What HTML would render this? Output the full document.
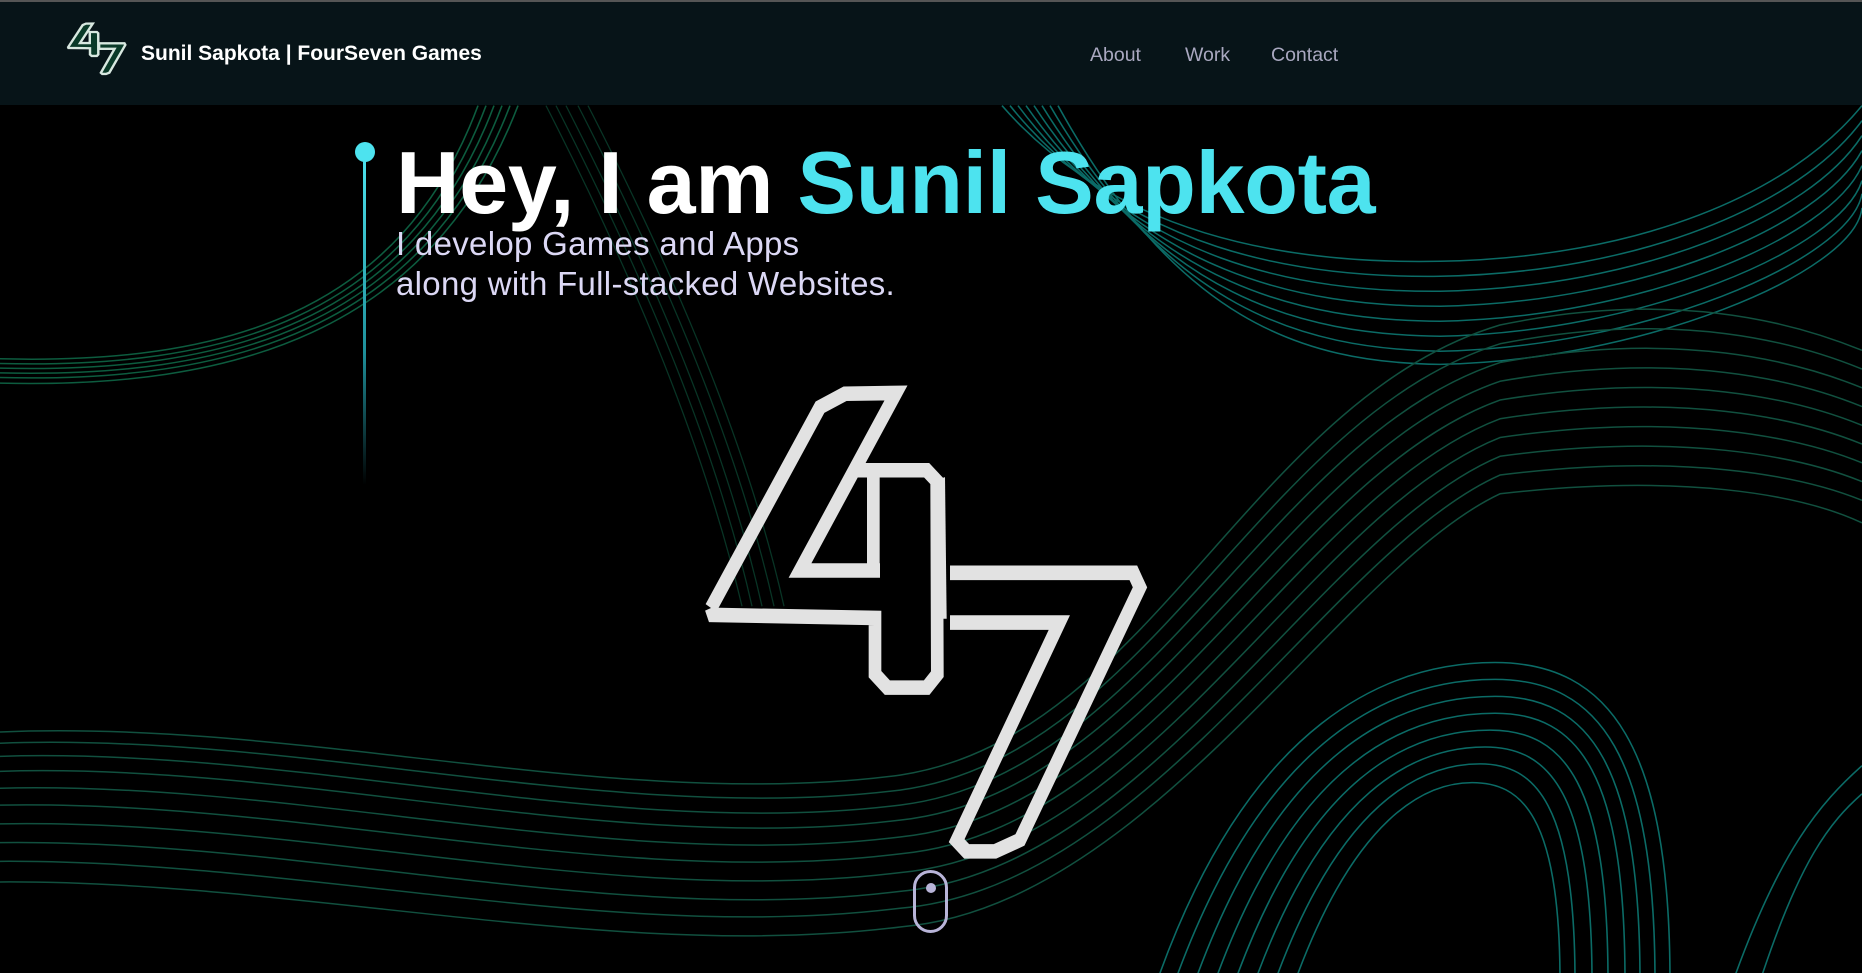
<!DOCTYPE html>
<html><head><meta charset="utf-8"><style>
*{margin:0;padding:0;box-sizing:border-box}
html,body{width:1862px;height:973px;overflow:hidden;background:#000;font-family:"Liberation Sans",sans-serif}
.nav{position:absolute;left:0;top:0;width:1862px;height:105px;background:#071418;border-top:2px solid #555}
.brand{position:absolute;left:141px;top:40px;color:#fff;font-weight:bold;font-size:21px}
.link{position:absolute;top:42px;color:#a9a8c0;font-size:19.5px}
.h1{position:absolute;left:396px;top:139px;font-size:88px;line-height:88px;font-weight:bold;color:#fff;white-space:nowrap;letter-spacing:-0.3px}
.h1 span{color:#4de3ef}
.sub{position:absolute;left:396px;top:224px;font-size:33px;line-height:40px;color:#dcd8f5;letter-spacing:0.3px}
.vline{position:absolute;left:363px;top:155px;width:3px;height:330px;background:linear-gradient(#4de3ef,#1e8f9a 60%,rgba(0,0,0,0))}
.dot{position:absolute;left:355px;top:142px;width:20px;height:20px;border-radius:50%;background:#4de3ef}
</style></head><body>
<svg width="1862" height="973" style="position:absolute;left:0;top:0" fill="none">
<g transform="matrix(1 0 0 0.9376 0 6.24)">
<g stroke="#0d5c3f" stroke-width="1.6">
<path d="M0 376 C220 382 400 330 478 106"/>
<path d="M0 381 C222 387 406 334 486 106"/>
<path d="M0 386 C224 392 412 338 494 106"/>
<path d="M0 391 C226 397 418 342 502 106"/>
<path d="M0 396 C228 402 424 346 510 106"/>
<path d="M0 402 C230 408 430 350 518 106"/>
</g>
<g stroke="#0c4a35" stroke-width="1.3" opacity="0.7">
<path d="M546 106 C620 260 700 450 742 640"/>
<path d="M556 106 C630 260 712 450 752 640"/>
<path d="M566 106 C640 260 722 450 762 640"/>
<path d="M578 106 C652 260 734 450 774 640"/>
<path d="M588 106 C662 260 744 450 784 640"/>
</g>
<g stroke="#0b6b66" stroke-width="1.6">
<path d="M1002 106 C1120 250 1300 275 1440 272 C1640 268 1790 200 1862 106"/>
<path d="M1010 106 C1128 262 1300 290 1440 288 C1640 284 1800 212 1862 122"/>
<path d="M1018 106 C1136 274 1300 305 1440 304 C1640 300 1810 224 1862 138"/>
<path d="M1026 106 C1144 286 1300 320 1440 320 C1640 316 1820 236 1862 154"/>
<path d="M1034 106 C1152 298 1300 335 1440 336 C1640 332 1830 248 1862 170"/>
<path d="M1042 106 C1160 310 1300 350 1440 352 C1640 348 1840 260 1862 186"/>
<path d="M1050 106 C1168 322 1300 365 1440 368 C1640 364 1850 272 1862 200"/>
<path d="M1058 106 C1176 334 1300 380 1440 382 C1640 378 1855 285 1862 215"/>
</g>
<g stroke="#11503f" stroke-width="1.6">
<path d="M0 774 C300 760 620 860 900 820 C1150 780 1250 420 1500 340 C1680 300 1800 340 1862 367"/>
<path d="M0 786 C300 774 620 874 900 836 C1150 800 1260 440 1500 360 C1680 322 1800 360 1862 387"/>
<path d="M0 800 C300 790 620 890 900 852 C1150 820 1270 460 1500 380 C1680 344 1800 380 1862 407"/>
<path d="M0 816 C300 806 620 906 900 868 C1150 840 1280 480 1500 400 C1680 366 1800 400 1862 427"/>
<path d="M0 834 C300 826 620 924 900 886 C1150 860 1290 500 1500 420 C1680 388 1800 420 1862 447"/>
<path d="M0 852 C300 846 620 942 900 904 C1150 880 1300 520 1500 440 C1680 410 1800 440 1862 467"/>
<path d="M0 872 C300 866 620 962 900 924 C1150 900 1310 540 1500 460 C1680 432 1800 460 1862 487"/>
<path d="M0 892 C300 888 620 982 900 944 C1150 920 1320 560 1500 480 C1680 454 1800 480 1862 507"/>
<path d="M0 912 C300 910 620 1000 900 962 C1150 940 1330 580 1500 500 C1680 476 1800 500 1862 527"/>
<path d="M0 934 C300 932 620 1020 900 982 C1150 960 1340 600 1500 520 C1680 498 1800 520 1862 551"/>
</g>
<g stroke="#0b6b66" stroke-width="1.6">
<path d="M1157 1040 C1250 760 1390 700 1495 700 C1610 700 1670 790 1670 1040"/>
<path d="M1175 1040 C1265 775 1395 718 1495 718 C1600 718 1655 800 1655 1040"/>
<path d="M1195 1040 C1280 790 1400 736 1495 736 C1590 736 1640 810 1640 1040"/>
<path d="M1215 1040 C1295 805 1405 754 1495 754 C1580 754 1625 820 1625 1040"/>
<path d="M1235 1040 C1310 820 1410 772 1490 772 C1565 772 1608 830 1608 1040"/>
<path d="M1255 1040 C1325 835 1415 790 1485 790 C1550 790 1592 840 1592 1040"/>
<path d="M1275 1040 C1340 850 1420 808 1480 808 C1535 808 1575 850 1575 1040"/>
<path d="M1295 1040 C1355 865 1425 828 1472 828 C1520 828 1560 860 1560 1040"/>
<path d="M1733 1040 C1780 900 1820 850 1862 810"/>
<path d="M1760 1040 C1800 910 1830 870 1862 840"/>
</g>
</g>
</svg>

<div class="nav">
<svg style="position:absolute;left:64px;top:19px" width="64" height="66" viewBox="0 0 1440 1568" preserveAspectRatio="none">
<g stroke="#d8e8e0" stroke-width="55" fill="#0a3a28" stroke-linejoin="miter">
<path d="M93 622 L420 97 L495 62 L648 60 L360 524 L580 524 L580 262 L740 262 L770 290 L772 795 L740 830 L622 830 L585 795 L585 648 L100 640 Z"/>
<path d="M790 530 L1360 530 L1380 568 L1020 1228 L945 1258 L860 1258 L830 1230 L1138 660 L790 660 Z"/>
</g>
</svg>
<div class="brand">Sunil Sapkota | FourSeven Games</div>
<div class="link" style="left:1090px">About</div>
<div class="link" style="left:1185px">Work</div>
<div class="link" style="left:1271px">Contact</div>
</div>

<div class="vline"></div><div class="dot"></div>
<div class="h1">Hey, I am <span>Sunil Sapkota</span></div>
<div class="sub">I develop Games and Apps<br>along with Full-stacked Websites.</div>

<svg style="position:absolute;left:680px;top:370px" width="480" height="600" viewBox="0 0 1440 1568" preserveAspectRatio="none" fill="none">
<g stroke="#e2e2e2" stroke-width="38" stroke-linejoin="miter">
<path d="M93 622 L420 97 L495 62 L648 60 L360 524 L600 524"/>
<path d="M580 540 L580 262"/>
<path d="M530 262 L740 262 L770 290 L772 795 L740 830 L622 830 L585 795 L585 648 L100 640 L93 622"/>
<path d="M810 530 L1360 530 L1380 568 L1020 1228 L945 1258 L860 1258 L830 1230 L1138 660 L810 660"/>
</g>
<path d="M760 290 L795 280 L800 650 L765 650 Z" fill="#e2e2e2"/>
</svg>
<svg style="position:absolute;left:912px;top:869px" width="37" height="65" viewBox="0 0 37 65" fill="none">
<rect x="2.5" y="2.5" width="32" height="60" rx="16" stroke="#b8b4d8" stroke-width="3"/>
<circle cx="19" cy="19" r="5" fill="#b8b4d8"/>
</svg>
</body></html>
